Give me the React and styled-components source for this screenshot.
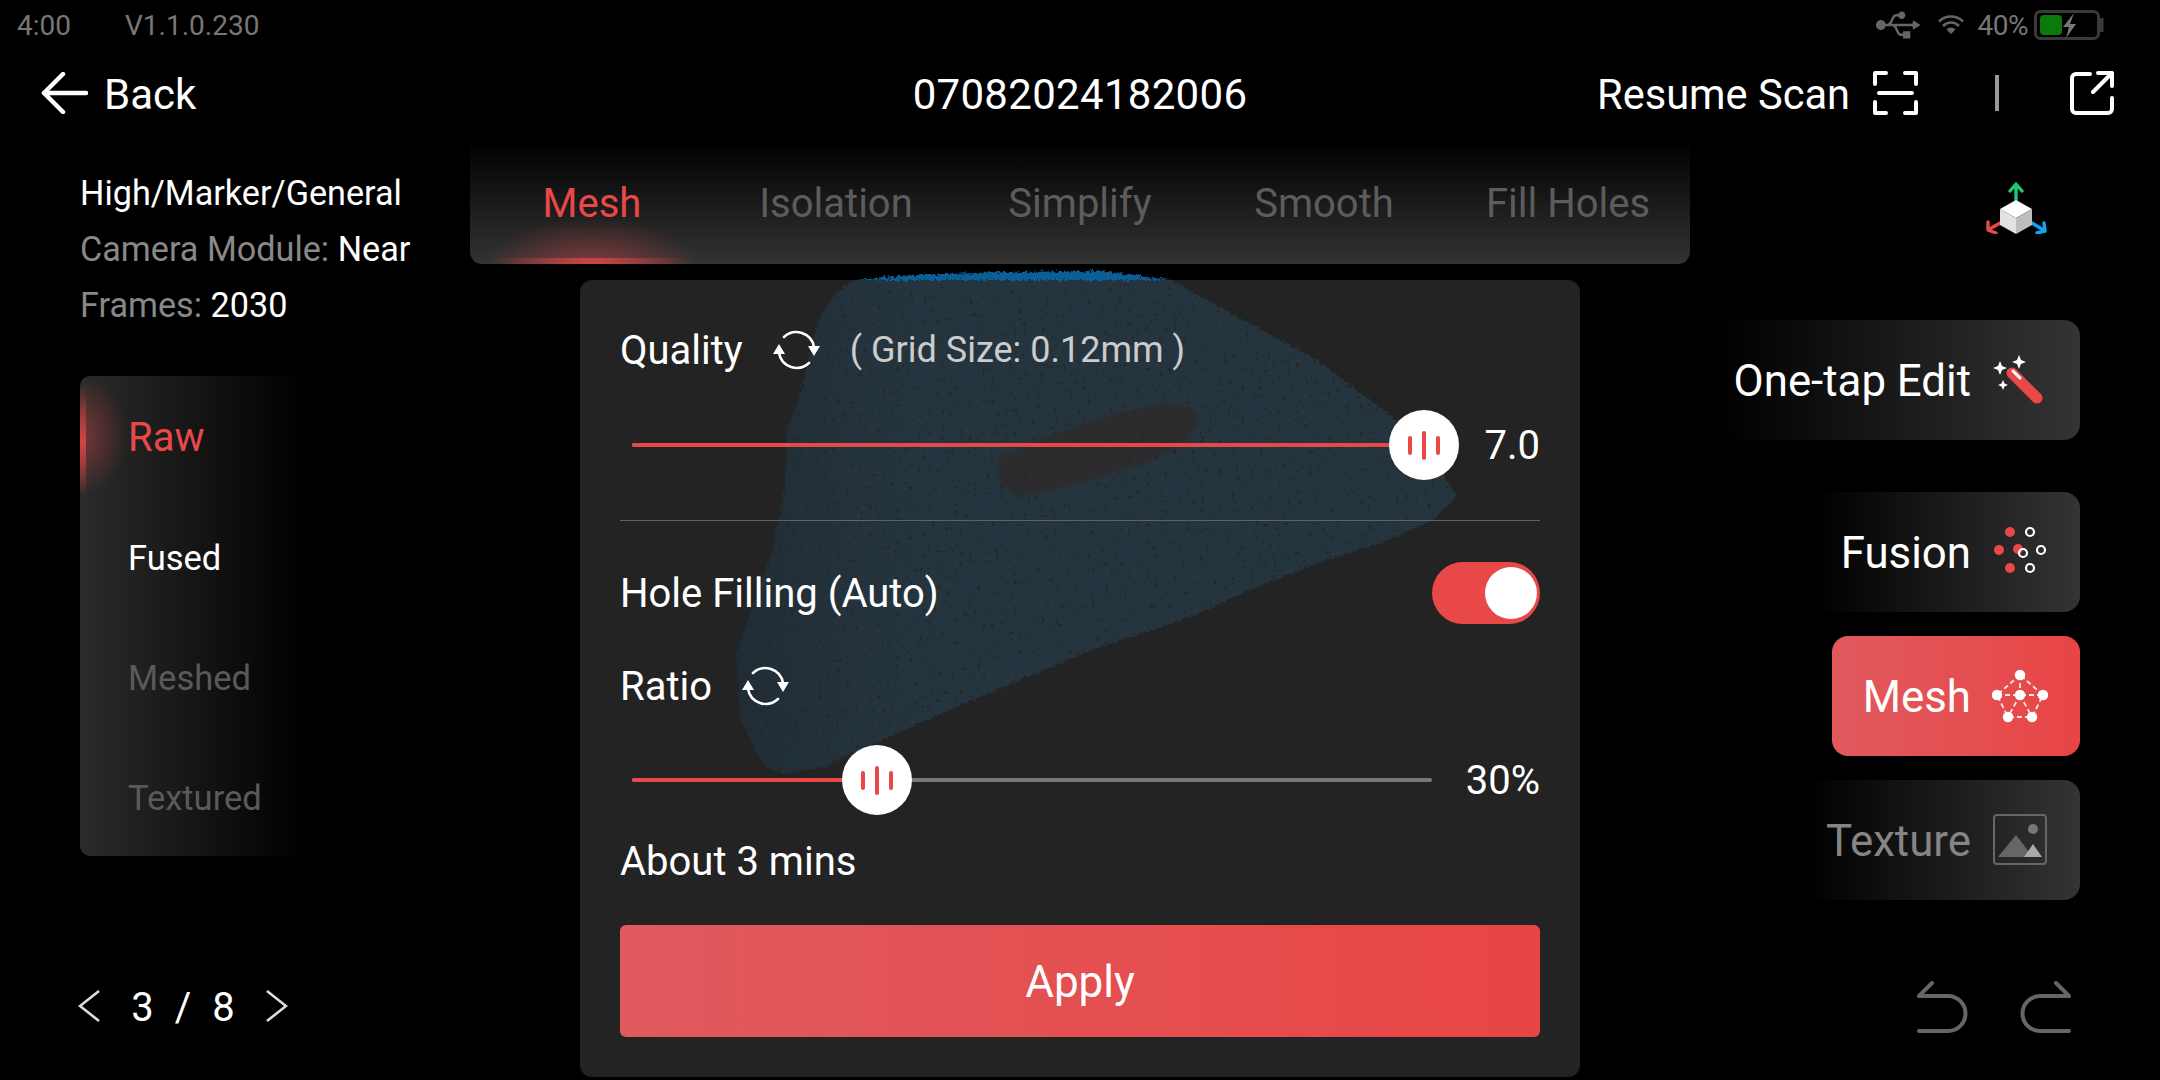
import React from "react";
import styled, { createGlobalStyle } from "styled-components";
import { FaUsb } from "react-icons/fa";

const RED = "#e84848";
const RED_GRADIENT = "linear-gradient(to right, #e05a5e, #e84545)";

const GlobalStyle = createGlobalStyle`
  html, body {
    margin: 0;
    padding: 0;
    background: #000;
  }
  * {
    box-sizing: border-box;
  }
`;

const Page = styled.div`
  width: 2160px;
  height: 1080px;
  background: #000;
  color: #fff;
  font-family: Roboto, "Liberation Sans", sans-serif;
  display: flex;
  flex-direction: column;
  overflow: hidden;
`;

const StatusBar = styled.div`
  height: 50px;
  padding: 0 56px 0 17px;
  display: flex;
  align-items: center;
  font-size: 28px;
  color: #777;
`;

const StatusVersion = styled.span`
  margin-left: 54px;
  flex: 1;
`;

const StatusRight = styled.div`
  display: flex;
  align-items: center;
  color: #666;
`;

const BatteryText = styled.span`
  margin: 0 6px 0 14px;
  letter-spacing: -0.5px;
  color: #777;
`;

const Header = styled.div`
  height: 86px;
  display: grid;
  grid-template-columns: 1fr auto 1fr;
  align-items: center;
`;

const HeaderLabel = styled.span`
  padding-top: 2px;
`;

const BackLink = styled.div`
  display: flex;
  align-items: center;
  gap: 16px;
  padding-left: 41px;
  font-size: 42px;
`;

const Title = styled.div`
  font-size: 42px;
  letter-spacing: 0.3px;
  padding-top: 2px;
`;

const HeaderActions = styled.div`
  display: flex;
  align-items: center;
  justify-content: flex-end;
  padding-right: 46px;
  font-size: 41.6px;
`;

const HeaderDivider = styled.div`
  width: 4px;
  height: 36px;
  background: #999;
  margin: 0 71px 0 77px;
`;

const Body = styled.div`
  flex: 1;
  display: grid;
  grid-template-columns: 470px 1220px 470px;
`;

const LeftColumn = styled.div`
  padding: 28px 0 0 80px;
`;

const InfoLine = styled.div`
  height: 56px;
  line-height: 58px;
  font-size: 34.2px;
  color: #888;
  white-space: nowrap;
`;

const White = styled.span`
  color: #fff;
`;

const StageList = styled.div`
  margin-top: 44px;
  width: 225px;
  height: 480px;
  border-radius: 10px;
  overflow: hidden;
  background: linear-gradient(to right, #2b2b2b, #000);
`;

const StageItem = styled.div`
  position: relative;
  height: 120px;
  display: flex;
  align-items: center;
  padding: 3px 0 0 48px;
  font-size: ${(p) => (p.$active ? "40px" : "34.5px")};
  color: ${(p) => (p.$active ? RED : p.$dim ? "#5a5a5a" : "#fff")};
  background: ${(p) =>
    p.$active
      ? "radial-gradient(ellipse 48px 60px at 0% 50%, rgba(232,72,72,0.42), rgba(232,72,72,0) 100%)"
      : "none"};

  &::before {
    content: ${(p) => (p.$active ? '""' : "none")};
    position: absolute;
    left: 0;
    top: 12px;
    bottom: 0;
    width: 6px;
    background: linear-gradient(to bottom, rgba(232,72,72,0), rgba(232,72,72,0.8) 50%, rgba(232,72,72,0));
  }
`;

const Pager = styled.div`
  margin-top: 130px;
  height: 40px;
  display: flex;
  align-items: center;
  font-size: 40px;
  margin-left: -2px;
`;

const PagerNumbers = styled.div`
  width: 166px;
  padding-top: 3px;
  display: flex;
  justify-content: center;
  gap: 21px;
`;

const CenterColumn = styled.div`
  display: flex;
  flex-direction: column;
  align-items: center;
  padding-top: 4px;
`;

const TabBar = styled.div`
  width: 1220px;
  height: 124px;
  display: grid;
  grid-template-columns: repeat(5, 1fr);
  border-radius: 0 0 12px 12px;
  overflow: hidden;
  background: linear-gradient(to bottom, #000, #333);
`;

const Tab = styled.div`
  position: relative;
  display: flex;
  align-items: flex-start;
  justify-content: center;
  padding-top: 40px;
  line-height: 48px;
  font-size: 40px;
  color: ${(p) => (p.$active ? RED : "#5c5c5c")};
  background: ${(p) =>
    p.$active
      ? "radial-gradient(ellipse 105px 46px at 50% 100%, rgba(232,72,72,0.42), rgba(232,72,72,0) 100%)"
      : "none"};

  &::after {
    content: ${(p) => (p.$active ? '""' : "none")};
    position: absolute;
    left: 22px;
    right: 22px;
    bottom: 0;
    height: 6px;
    background: linear-gradient(to right, rgba(232,72,72,0), rgba(232,72,72,0.75) 50%, rgba(232,72,72,0));
  }
`;

const Panel = styled.div`
  position: relative;
  margin-top: 16px;
  width: 1000px;
  height: 797px;
  background: #232323;
  border-radius: 12px;
`;

const MeshLayer = styled.svg`
  position: absolute;
  left: 0;
  top: -14px;
  width: 1000px;
  height: 520px;
`;

const PanelContent = styled.div`
  position: relative;
  height: 100%;
  padding: 0 40px;
  display: flex;
  flex-direction: column;
`;

const LabelRow = styled.div`
  height: ${(p) => p.$height || "64px"};
  margin-top: ${(p) => p.$top || "0"};
  display: flex;
  align-items: center;
  justify-content: ${(p) => (p.$spread ? "space-between" : "flex-start")};
  gap: 29px;
  font-size: 40px;
`;

const GridNote = styled.span`
  font-size: 36px;
  color: #ccc;
`;

const SliderRow = styled.div`
  height: 70px;
  margin-top: ${(p) => p.$top};
  padding-left: 12px;
  display: flex;
  align-items: center;
  justify-content: space-between;
`;

const Track = styled.div`
  position: relative;
  width: 800px;
  height: 4px;
  border-radius: 2px;
  background: #777;
`;

const TrackFill = styled.div`
  height: 100%;
  border-radius: 2px;
  background: ${RED};
`;

const Thumb = styled.div`
  position: absolute;
  top: -33px;
  width: 70px;
  height: 70px;
  margin-left: -35px;
  border-radius: 50%;
  background: #fff;
  display: flex;
  align-items: center;
  justify-content: center;
  gap: 10px;
`;

const ThumbBar = styled.div`
  width: 4px;
  height: ${(p) => p.$height}px;
  border-radius: 2px;
  background: ${RED};
`;

const SliderValue = styled.span`
  font-size: 40px;
`;

const Divider = styled.div`
  height: 1px;
  margin-top: 40px;
  background: #626262;
`;

const Toggle = styled.div`
  width: 108px;
  height: 62px;
  border-radius: 31px;
  background: ${RED};
  display: flex;
  align-items: center;
  justify-content: flex-end;
  padding-right: 3px;
`;

const ToggleKnob = styled.div`
  width: 52px;
  height: 52px;
  border-radius: 50%;
  background: #fff;
`;

const ApplyButton = styled.div`
  height: 112px;
  margin-top: 32px;
  padding-top: 2px;
  border-radius: 6px;
  background: ${RED_GRADIENT};
  display: flex;
  align-items: center;
  justify-content: center;
  font-size: 44px;
`;

const RightColumn = styled.div`
  padding: 46px 80px 0 0;
  display: flex;
  flex-direction: column;
  align-items: flex-end;
`;

const GizmoWrap = styled.div`
  height: 52px;
  margin: 0 32px 86px 0;
`;

const ActionButton = styled.div`
  width: ${(p) => p.$width}px;
  height: 120px;
  margin-bottom: ${(p) => p.$gap || 24}px;
  padding-right: 32px;
  border-radius: 16px;
  display: flex;
  align-items: center;
  justify-content: flex-end;
  gap: 21px;
  font-size: 43.8px;
  color: ${(p) => (p.$dim ? "#858585" : "#fff")};
  background: ${(p) => (p.$active ? RED_GRADIENT : "linear-gradient(to left, #343434, #000)")};
`;

const ActionLabel = styled.span`
  padding-top: 2px;
`;

const ActionIcon = styled.svg`
  width: 56px;
  height: 56px;
  flex: none;
`;

const HistoryRow = styled.div`
  margin: 57px 9px 0 0;
  display: flex;
  gap: 52px;
`;

const BackArrow = () => (
  <svg width="47" height="42" viewBox="0 0 47 42" fill="none" stroke="#fff" strokeWidth="4.5" strokeLinecap="round" strokeLinejoin="round">
    <path d="M45 21H3M22 2L3 21l19 19" />
  </svg>
);

const ScanIcon = () => (
  <svg width="45" height="44" viewBox="0 0 45 44" fill="none" stroke="#fff" strokeWidth="4" strokeLinecap="round" strokeLinejoin="round" style={{ marginLeft: 23 }}>
    <path d="M13 2H2v11M32 2h11v11M2 31v11h11M43 31v11H32M6 22h33" />
  </svg>
);

const ExportIcon = () => (
  <svg width="44" height="44" viewBox="0 0 44 44" fill="none" stroke="#fff" strokeWidth="4" strokeLinecap="round" strokeLinejoin="round">
    <path d="M20 3H6a4 4 0 0 0-4 4v31a4 4 0 0 0 4 4h32a4 4 0 0 0 4-4V27M42 15V2H28M42 2L23 21" />
  </svg>
);

const WifiIcon = () => (
  <svg width="26" height="20" viewBox="0 0 26 20" fill="none" stroke="#666" strokeWidth="2.6" style={{ marginLeft: 18 }}>
    <path d="M1 6.5a17 17 0 0 1 24 0M5 11a11 11 0 0 1 16 0" />
    <path d="M8.5 14.5a6 6 0 0 1 9 0L13 19z" fill="#666" stroke="none" />
  </svg>
);

const BatteryIcon = () => (
  <svg width="70" height="30" viewBox="0 0 70 30">
    <rect x="1.5" y="1.5" width="63" height="27" rx="5" fill="none" stroke="#3a3a3a" strokeWidth="3" />
    <rect x="66" y="8" width="3.5" height="14" rx="1" fill="#3a3a3a" />
    <rect x="6" y="5" width="22" height="20" rx="4" fill="#0a7a0a" />
    <path d="M40 3L29 17h6l-3 11 10-14h-6z" fill="#777" />
  </svg>
);

const RefreshIcon = () => (
  <svg width="49" height="40" viewBox="0 0 49 40" fill="none">
    <path d="M12 7A18 18 0 0 1 42 17M37 33A18 18 0 0 1 7 23" stroke="#fff" strokeWidth="2.6" strokeLinecap="round" />
    <path d="M36 16h12l-6 10zM1 24h12L7 14z" fill="#fff" />
  </svg>
);

const Chevron = ({ right }) => (
  <svg width="22" height="32" viewBox="0 0 22 32" fill="none" stroke="#ddd" strokeWidth="2.6">
    <path d={right ? "M1 1l19 15L1 31" : "M21 1L2 16l19 15"} />
  </svg>
);

const GizmoIcon = () => (
  <svg width="63" height="52" viewBox="0 0 63 52" fill="none">
    <path d="M31 18V3M25 9l6-7 6 7" stroke="#22c777" strokeWidth="3.4" strokeLinecap="round" strokeLinejoin="round" />
    <path d="M15 41L3 48M3 40v8l8 3" stroke="#e84848" strokeWidth="3.4" strokeLinecap="round" strokeLinejoin="round" />
    <path d="M47 41l13 8M59 41l1 8-8 2" stroke="#10a5f0" strokeWidth="3.4" strokeLinecap="round" strokeLinejoin="round" />
    <path d="M31 18l16 9-16 9-16-9z" fill="#fff" />
    <path d="M15 27l16 9v16l-16-9z" fill="#e2e2e2" />
    <path d="M47 27l-16 9v16l16-9z" fill="#bdbdbd" />
  </svg>
);

const WandIcon = () => (
  <ActionIcon viewBox="0 0 56 56" fill="none">
    <path d="M20 21l25 25" stroke={RED} strokeWidth="11" strokeLinecap="round" />
    <path d="M21 19l7 7" stroke="#fff" strokeWidth="3" strokeLinecap="round" />
    <path d="M8 9l2 5 5 2-5 2-2 5-2-5-5-2 5-2z M27 3l2 5 5 2-5 2-2 5-2-5-5-2 5-2z M11 28l1.5 3.5L16 33l-3.500 1.500L11 38l-1.500-3.500L6 33l3.500-1.500z" fill="#fff" />
  </ActionIcon>
);

const FusionIcon = () => (
  <ActionIcon viewBox="0 0 56 56" fill="none">
    <g fill={RED}>
      <circle cx="18" cy="8" r="5" />
      <circle cx="7" cy="26" r="5" />
      <circle cx="26" cy="25" r="5" />
      <circle cx="18" cy="44" r="5" />
    </g>
    <g stroke="#fff" strokeWidth="2.2">
      <circle cx="38" cy="8" r="4" />
      <circle cx="49" cy="26" r="4" />
      <circle cx="31" cy="29" r="4" />
      <circle cx="38" cy="44" r="4" />
    </g>
  </ActionIcon>
);

const MeshIcon = () => (
  <ActionIcon viewBox="0 0 56 56" fill="none">
    <path d="M28 7L5 27l11 22h24l11-22zM5 27h46M28 7v20M28 27L16 49M28 27l12 22" stroke="#fff" strokeWidth="1.800" strokeDasharray="5 3" opacity="0.85" />
    <g fill="#fff">
      <circle cx="28" cy="7" r="5.200" />
      <circle cx="5" cy="27" r="5.200" />
      <circle cx="28" cy="27" r="5.200" />
      <circle cx="51" cy="27" r="5.200" />
      <circle cx="16" cy="49" r="5.200" />
      <circle cx="40" cy="49" r="5.200" />
    </g>
  </ActionIcon>
);

const TextureIcon = () => (
  <ActionIcon viewBox="0 0 56 56" fill="none">
    <rect x="2" y="3" width="52" height="49" rx="3" stroke="#666" strokeWidth="2" />
    <circle cx="41" cy="17" r="5" fill="#777" />
    <path d="M6 45L24 23l17 22z" fill="#666" strokeLinejoin="round" />
    <path d="M32 45l9-13 9 13z" fill="#aaa" />
  </ActionIcon>
);

const HistoryIcon = ({ redo }) => (
  <svg width="51" height="52" viewBox="0 0 51 52" fill="none" stroke="#666" strokeWidth="4" strokeLinecap="round" strokeLinejoin="round" style={redo ? { transform: "scaleX(-1)" } : undefined}>
    <path d="M15 2L2 15h29a17.500 17.500 0 0 1 0 35H2" />
  </svg>
);

// the scanned part behind the settings panel, drawn in page coordinates
const ScannedMesh = () => (
  <MeshLayer viewBox="580 266 1000 520">
    <defs>
      <filter id="rough" x="-5%" y="-5%" width="110%" height="110%" colorInterpolationFilters="sRGB">
        <feTurbulence type="fractalNoise" baseFrequency="0.35" numOctaves="2" seed="4" result="n" />
        <feDisplacementMap in="SourceGraphic" in2="n" scale="7" xChannelSelector="R" yChannelSelector="G" />
      </filter>
      <filter id="speckle" x="0" y="0" width="100%" height="100%" colorInterpolationFilters="sRGB">
        <feTurbulence type="fractalNoise" baseFrequency="0.22" numOctaves="3" seed="9" />
        <feColorMatrix values="0 0 0 0 0.16  0 0 0 0 0.15  0 0 0 0 0.15  0 0 0 -12 4" />
        <feComposite in2="SourceAlpha" operator="in" />
      </filter>
      <filter id="soft" colorInterpolationFilters="sRGB">
        <feGaussianBlur stdDeviation="1.5" />
      </filter>
      <linearGradient id="meshFill" x1="0" y1="0" x2="1" y2="0">
        <stop offset="0" stopColor="#202d36" />
        <stop offset="0.25" stopColor="#25353f" />
        <stop offset="1" stopColor="#25353f" />
      </linearGradient>
    </defs>
    <g filter="url(#rough)">
      <path d="M855 280L895 276L1000 272L1100 271L1171 280Z" fill="#0b5e96" />
      <path
        d="M855 280L1171 280L1238 317L1317 360L1392 417L1440 470L1457 496L1433 520L1383 542L1317 563L1233 597L1190 617L1100 647L1044 670L926 720L823 767L783 774Q766 770 760 760L740 717L736 653L772 553L785 487L787 430L800 397L812 343Q818 318 828 303Q840 288 855 280Z"
        fill="url(#meshFill)"
      />
    </g>
    <path
      d="M997 458L1040 440L1090 420L1130 410L1170 403L1195 410L1198 423L1180 447L1147 463L1097 478L1063 487L1020 497L1000 485Z"
      fill="#2e2a2a"
      opacity="0.8"
      filter="url(#soft)"
    />
    <path
      d="M855 284L1171 284L1238 317L1317 360L1392 417L1440 470L1457 496L1433 520L1383 542L1317 563L1233 597L1100 647L926 720L823 767L783 774L760 760L740 717L736 653L772 553L787 420L812 343Z"
      fill="#000"
      filter="url(#speckle)"
    />
  </MeshLayer>
);

const Slider = ({ top, percent, filled, value }) => (
  <SliderRow $top={top}>
    <Track>
      <TrackFill style={{ width: `${filled}%` }} />
      <Thumb style={{ left: `${percent}%` }}>
        <ThumbBar $height={19} />
        <ThumbBar $height={29} />
        <ThumbBar $height={19} />
      </Thumb>
    </Track>
    <SliderValue>{value}</SliderValue>
  </SliderRow>
);

const tabs = ["Mesh", "Isolation", "Simplify", "Smooth", "Fill Holes"];

export default function App() {
  return (
    <Page>
      <GlobalStyle />
      <StatusBar>
        <span>4:00</span>
        <StatusVersion>V1.1.0.230</StatusVersion>
        <StatusRight>
          <FaUsb size={44} />
          <WifiIcon />
          <BatteryText>40%</BatteryText>
          <BatteryIcon />
        </StatusRight>
      </StatusBar>

      <Header>
        <BackLink>
          <BackArrow />
          <HeaderLabel>Back</HeaderLabel>
        </BackLink>
        <Title>07082024182006</Title>
        <HeaderActions>
          <HeaderLabel>Resume Scan</HeaderLabel>
          <ScanIcon />
          <HeaderDivider />
          <ExportIcon />
        </HeaderActions>
      </Header>

      <Body>
        <LeftColumn>
          <InfoLine>
            <White>High/Marker/General</White>
          </InfoLine>
          <InfoLine>
            Camera Module: <White>Near</White>
          </InfoLine>
          <InfoLine>
            Frames: <White>2030</White>
          </InfoLine>
          <StageList>
            <StageItem $active>Raw</StageItem>
            <StageItem>Fused</StageItem>
            <StageItem $dim>Meshed</StageItem>
            <StageItem $dim>Textured</StageItem>
          </StageList>
          <Pager>
            <Chevron />
            <PagerNumbers>
              <span>3</span>
              <span>/</span>
              <span>8</span>
            </PagerNumbers>
            <Chevron right />
          </Pager>
        </LeftColumn>

        <CenterColumn>
          <TabBar>
            {tabs.map((tab, i) => (
              <Tab key={tab} $active={i === 0}>
                {tab}
              </Tab>
            ))}
          </TabBar>
          <Panel>
            <ScannedMesh />
            <PanelContent>
              <LabelRow $top="38px">
                Quality
                <RefreshIcon />
                <GridNote>( Grid Size: 0.12mm )</GridNote>
              </LabelRow>
              <Slider top="28px" percent={99} filled={99} value="7.0" />
              <Divider />
              <LabelRow $top="41px" $height="62px" $spread>
                Hole Filling (Auto)
                <Toggle>
                  <ToggleKnob />
                </Toggle>
              </LabelRow>
              <LabelRow $top="30px">
                Ratio
                <RefreshIcon />
              </LabelRow>
              <Slider top="27px" percent={30.6} filled={30.6} value="30%" />
              <LabelRow $top="14px">About 3 mins</LabelRow>
              <ApplyButton>Apply</ApplyButton>
            </PanelContent>
          </Panel>
        </CenterColumn>

        <RightColumn>
          <GizmoWrap>
            <GizmoIcon />
          </GizmoWrap>
          <ActionButton $width={360} $gap={52}>
            <ActionLabel>One-tap Edit</ActionLabel>
            <WandIcon />
          </ActionButton>
          <ActionButton $width={265}>
            <ActionLabel>Fusion</ActionLabel>
            <FusionIcon />
          </ActionButton>
          <ActionButton $width={248} $active>
            <ActionLabel>Mesh</ActionLabel>
            <MeshIcon />
          </ActionButton>
          <ActionButton $width={275} $dim>
            <ActionLabel>Texture</ActionLabel>
            <TextureIcon />
          </ActionButton>
          <HistoryRow>
            <HistoryIcon />
            <HistoryIcon redo />
          </HistoryRow>
        </RightColumn>
      </Body>
    </Page>
  );
}
